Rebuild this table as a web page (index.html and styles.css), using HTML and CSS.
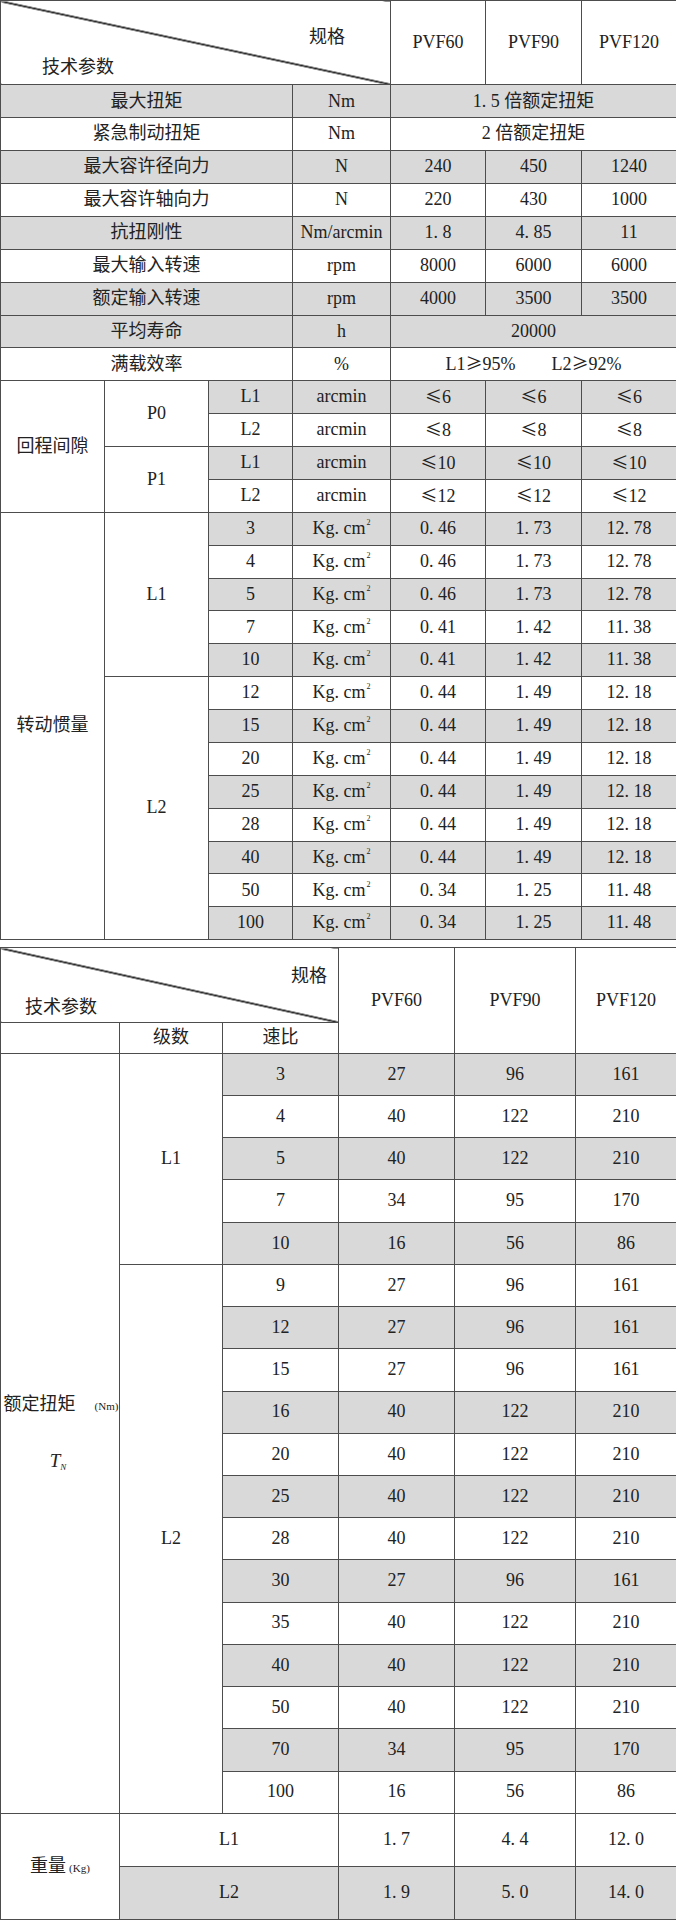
FILE: index.html
```html
<!DOCTYPE html>
<html lang="zh-CN">
<head>
<meta charset="utf-8">
<title>PVF 技术参数</title>
<link rel="stylesheet" href="styles.css">
</head>
<body>
<table class="spec t1">
  <colgroup>
    <col class="w104"><col class="w104"><col class="w84"><col class="w98"><col class="w95"><col class="w96"><col class="w95">
  </colgroup>
  <tr class="h1a">
    <td colspan="4" class="diag">
      <div class="diag-in d1"><span class="lbl-spec">规格</span><span class="lbl-param">技术参数</span></div>
    </td>
    <td>PVF60</td><td>PVF90</td><td>PVF120</td>
  </tr>
  <tr class="r g"><td colspan="3">最大扭矩</td><td>Nm</td><td colspan="3">1. 5 倍额定扭矩</td></tr>
  <tr class="r"><td colspan="3">紧急制动扭矩</td><td>Nm</td><td colspan="3">2 倍额定扭矩</td></tr>
  <tr class="r g"><td colspan="3">最大容许径向力</td><td>N</td><td>240</td><td>450</td><td>1240</td></tr>
  <tr class="r"><td colspan="3">最大容许轴向力</td><td>N</td><td>220</td><td>430</td><td>1000</td></tr>
  <tr class="r g"><td colspan="3">抗扭刚性</td><td>Nm/arcmin</td><td>1. 8</td><td>4. 85</td><td>11</td></tr>
  <tr class="r"><td colspan="3">最大输入转速</td><td>rpm</td><td>8000</td><td>6000</td><td>6000</td></tr>
  <tr class="r g"><td colspan="3">额定输入转速</td><td>rpm</td><td>4000</td><td>3500</td><td>3500</td></tr>
  <tr class="r g"><td colspan="3">平均寿命</td><td>h</td><td colspan="3">20000</td></tr>
  <tr class="r"><td colspan="3">满载效率</td><td>%</td><td colspan="3"><span class="eff">L1<span class="sym">≥</span>95%</span><span class="eff">L2<span class="sym">≥</span>92%</span></td></tr>
  <tr class="r"><td rowspan="4" class="w">回程间隙</td><td rowspan="2" class="w">P0</td><td class="gc">L1</td><td class="gc">arcmin</td><td class="gc"><span class="sym">≤</span>6</td><td class="gc"><span class="sym">≤</span>6</td><td class="gc"><span class="sym">≤</span>6</td></tr>
  <tr class="r"><td>L2</td><td>arcmin</td><td><span class="sym">≤</span>8</td><td><span class="sym">≤</span>8</td><td><span class="sym">≤</span>8</td></tr>
  <tr class="r"><td rowspan="2" class="w">P1</td><td class="gc">L1</td><td class="gc">arcmin</td><td class="gc"><span class="sym">≤</span>10</td><td class="gc"><span class="sym">≤</span>10</td><td class="gc"><span class="sym">≤</span>10</td></tr>
  <tr class="r"><td>L2</td><td>arcmin</td><td><span class="sym">≤</span>12</td><td><span class="sym">≤</span>12</td><td><span class="sym">≤</span>12</td></tr>
  <tr class="r"><td rowspan="13">转动惯量</td><td rowspan="5">L1</td><td class="gc">3</td><td class="gc">Kg. cm<sup>2</sup></td><td class="gc">0. 46</td><td class="gc">1. 73</td><td class="gc">12. 78</td></tr>
  <tr class="r"><td>4</td><td>Kg. cm<sup>2</sup></td><td>0. 46</td><td>1. 73</td><td>12. 78</td></tr>
  <tr class="r"><td class="gc">5</td><td class="gc">Kg. cm<sup>2</sup></td><td class="gc">0. 46</td><td class="gc">1. 73</td><td class="gc">12. 78</td></tr>
  <tr class="r"><td>7</td><td>Kg. cm<sup>2</sup></td><td>0. 41</td><td>1. 42</td><td>11. 38</td></tr>
  <tr class="r"><td class="gc">10</td><td class="gc">Kg. cm<sup>2</sup></td><td class="gc">0. 41</td><td class="gc">1. 42</td><td class="gc">11. 38</td></tr>
  <tr class="r"><td rowspan="8">L2</td><td>12</td><td>Kg. cm<sup>2</sup></td><td>0. 44</td><td>1. 49</td><td>12. 18</td></tr>
  <tr class="r"><td class="gc">15</td><td class="gc">Kg. cm<sup>2</sup></td><td class="gc">0. 44</td><td class="gc">1. 49</td><td class="gc">12. 18</td></tr>
  <tr class="r"><td>20</td><td>Kg. cm<sup>2</sup></td><td>0. 44</td><td>1. 49</td><td>12. 18</td></tr>
  <tr class="r"><td class="gc">25</td><td class="gc">Kg. cm<sup>2</sup></td><td class="gc">0. 44</td><td class="gc">1. 49</td><td class="gc">12. 18</td></tr>
  <tr class="r"><td>28</td><td>Kg. cm<sup>2</sup></td><td>0. 44</td><td>1. 49</td><td>12. 18</td></tr>
  <tr class="r"><td class="gc">40</td><td class="gc">Kg. cm<sup>2</sup></td><td class="gc">0. 44</td><td class="gc">1. 49</td><td class="gc">12. 18</td></tr>
  <tr class="r"><td>50</td><td>Kg. cm<sup>2</sup></td><td>0. 34</td><td>1. 25</td><td>11. 48</td></tr>
  <tr class="r"><td class="gc">100</td><td class="gc">Kg. cm<sup>2</sup></td><td class="gc">0. 34</td><td class="gc">1. 25</td><td class="gc">11. 48</td></tr>
</table>

<table class="spec t2">
  <colgroup>
    <col class="w119"><col class="w103"><col class="w116"><col class="w116"><col class="w121"><col class="w101">
  </colgroup>
  <tr class="h2a">
    <td colspan="3" class="diag">
      <div class="diag-in d2"><span class="lbl-spec">规格</span><span class="lbl-param">技术参数</span></div>
    </td>
    <td rowspan="2">PVF60</td><td rowspan="2">PVF90</td><td rowspan="2">PVF120</td>
  </tr>
  <tr class="h2b"><td></td><td>级数</td><td>速比</td></tr>
  <tr class="q">
    <td rowspan="18" class="torque">
      <div class="tq-line">额定扭矩<span class="unit tq-unit">(Nm)</span></div>
      <div class="tn">T<sub>N</sub></div>
    </td>
    <td rowspan="5">L1</td><td class="gc">3</td><td class="gc">27</td><td class="gc">96</td><td class="gc">161</td>
  </tr>
  <tr class="q"><td>4</td><td>40</td><td>122</td><td>210</td></tr>
  <tr class="q"><td class="gc">5</td><td class="gc">40</td><td class="gc">122</td><td class="gc">210</td></tr>
  <tr class="q"><td>7</td><td>34</td><td>95</td><td>170</td></tr>
  <tr class="q"><td class="gc">10</td><td class="gc">16</td><td class="gc">56</td><td class="gc">86</td></tr>
  <tr class="q"><td rowspan="13">L2</td><td>9</td><td>27</td><td>96</td><td>161</td></tr>
  <tr class="q"><td class="gc">12</td><td class="gc">27</td><td class="gc">96</td><td class="gc">161</td></tr>
  <tr class="q"><td>15</td><td>27</td><td>96</td><td>161</td></tr>
  <tr class="q"><td class="gc">16</td><td class="gc">40</td><td class="gc">122</td><td class="gc">210</td></tr>
  <tr class="q"><td>20</td><td>40</td><td>122</td><td>210</td></tr>
  <tr class="q"><td class="gc">25</td><td class="gc">40</td><td class="gc">122</td><td class="gc">210</td></tr>
  <tr class="q"><td>28</td><td>40</td><td>122</td><td>210</td></tr>
  <tr class="q"><td class="gc">30</td><td class="gc">27</td><td class="gc">96</td><td class="gc">161</td></tr>
  <tr class="q"><td>35</td><td>40</td><td>122</td><td>210</td></tr>
  <tr class="q"><td class="gc">40</td><td class="gc">40</td><td class="gc">122</td><td class="gc">210</td></tr>
  <tr class="q"><td>50</td><td>40</td><td>122</td><td>210</td></tr>
  <tr class="q"><td class="gc">70</td><td class="gc">34</td><td class="gc">95</td><td class="gc">170</td></tr>
  <tr class="q"><td>100</td><td>16</td><td>56</td><td>86</td></tr>
  <tr class="wt"><td rowspan="2">重量<span class="unit wt-unit">(Kg)</span></td><td colspan="2">L1</td><td>1. 7</td><td>4. 4</td><td>12. 0</td></tr>
  <tr class="wt"><td colspan="2" class="gc">L2</td><td class="gc">1. 9</td><td class="gc">5. 0</td><td class="gc">14. 0</td></tr>
</table>
</body>
</html>
```
FILE: styles.css
```css
html, body {
  margin: 0;
  padding: 0;
  background: #ffffff;
}

body {
  font-family: "Liberation Serif", "Noto Sans CJK SC", serif;
  color: #222222;
}

.spec {
  border-collapse: collapse;
  table-layout: fixed;
  width: 676px;
  font-size: 18px;
  line-height: 1.2;
}

.spec td {
  border: 1px solid #4d4d4d;
  padding: 0;
  text-align: center;
  vertical-align: middle;
  white-space: nowrap;
  background: #ffffff;
}

.spec tr.g td,
.spec td.gc {
  background: #d9d9d9;
}

.spec tr.g td.w,
.spec td.w {
  background: #ffffff;
}

/* column widths */
.w84 { width: 84px; }
.w95 { width: 95px; }
.w96 { width: 96px; }
.w98 { width: 98px; }
.w101 { width: 101px; }
.w103 { width: 103px; }
.w104 { width: 104px; }
.w116 { width: 116px; }
.w119 { width: 119px; }
.w121 { width: 121px; }

/* row heights */
.t1 .h1a { height: 84.4px; }
.t1 .r { height: 32.88px; }

.t2 {
  margin-top: 7px;
}
.t2 .h2a { height: 74.7px; }
.t2 .h2b { height: 31px; }
.t2 .q { height: 42.22px; }
.t2 .wt { height: 53.3px; }

/* diagonal header */
.spec td.diag {
  background: linear-gradient(to top right,
    transparent calc(50% - 1.2px),
    #262626 calc(50% - 0.6px),
    #262626 calc(50% + 0.6px),
    transparent calc(50% + 1.2px));
  vertical-align: top;
  text-align: left;
}

.diag-in {
  display: flex;
  flex-direction: column;
  font-family: "Noto Sans CJK SC", sans-serif;
  font-size: 18px;
  line-height: 22px;
}

.diag-in .lbl-spec {
  align-self: flex-end;
}

.d1 {
  padding-top: 23px;
}
.d1 .lbl-spec { margin-right: 45px; }
.d1 .lbl-param { margin-left: 41px; margin-top: 8px; }

.d2 {
  padding-top: 15px;
}
.d2 .lbl-spec { margin-right: 11px; }
.d2 .lbl-param { margin-left: 24px; margin-top: 9px; }

.sym {
  font-family: "Noto Sans CJK SC", sans-serif;
  font-size: 17px;
}

.eff + .eff {
  margin-left: 36px;
}

sup {
  font-size: 8px;
  line-height: 0;
  vertical-align: 9px;
  margin-left: 1px;
}

.unit {
  font-size: 11px;
}

.tq-unit {
  margin-left: 19px;
}

.wt-unit {
  margin-left: 3px;
}

.torque .tq-line {
  margin-bottom: 34px;
  padding-left: 2px;
}

.tn {
  font-style: italic;
  font-size: 19px;
  padding-right: 4px;
}

.tn sub {
  font-size: 9px;
  vertical-align: -3px;
}
```
